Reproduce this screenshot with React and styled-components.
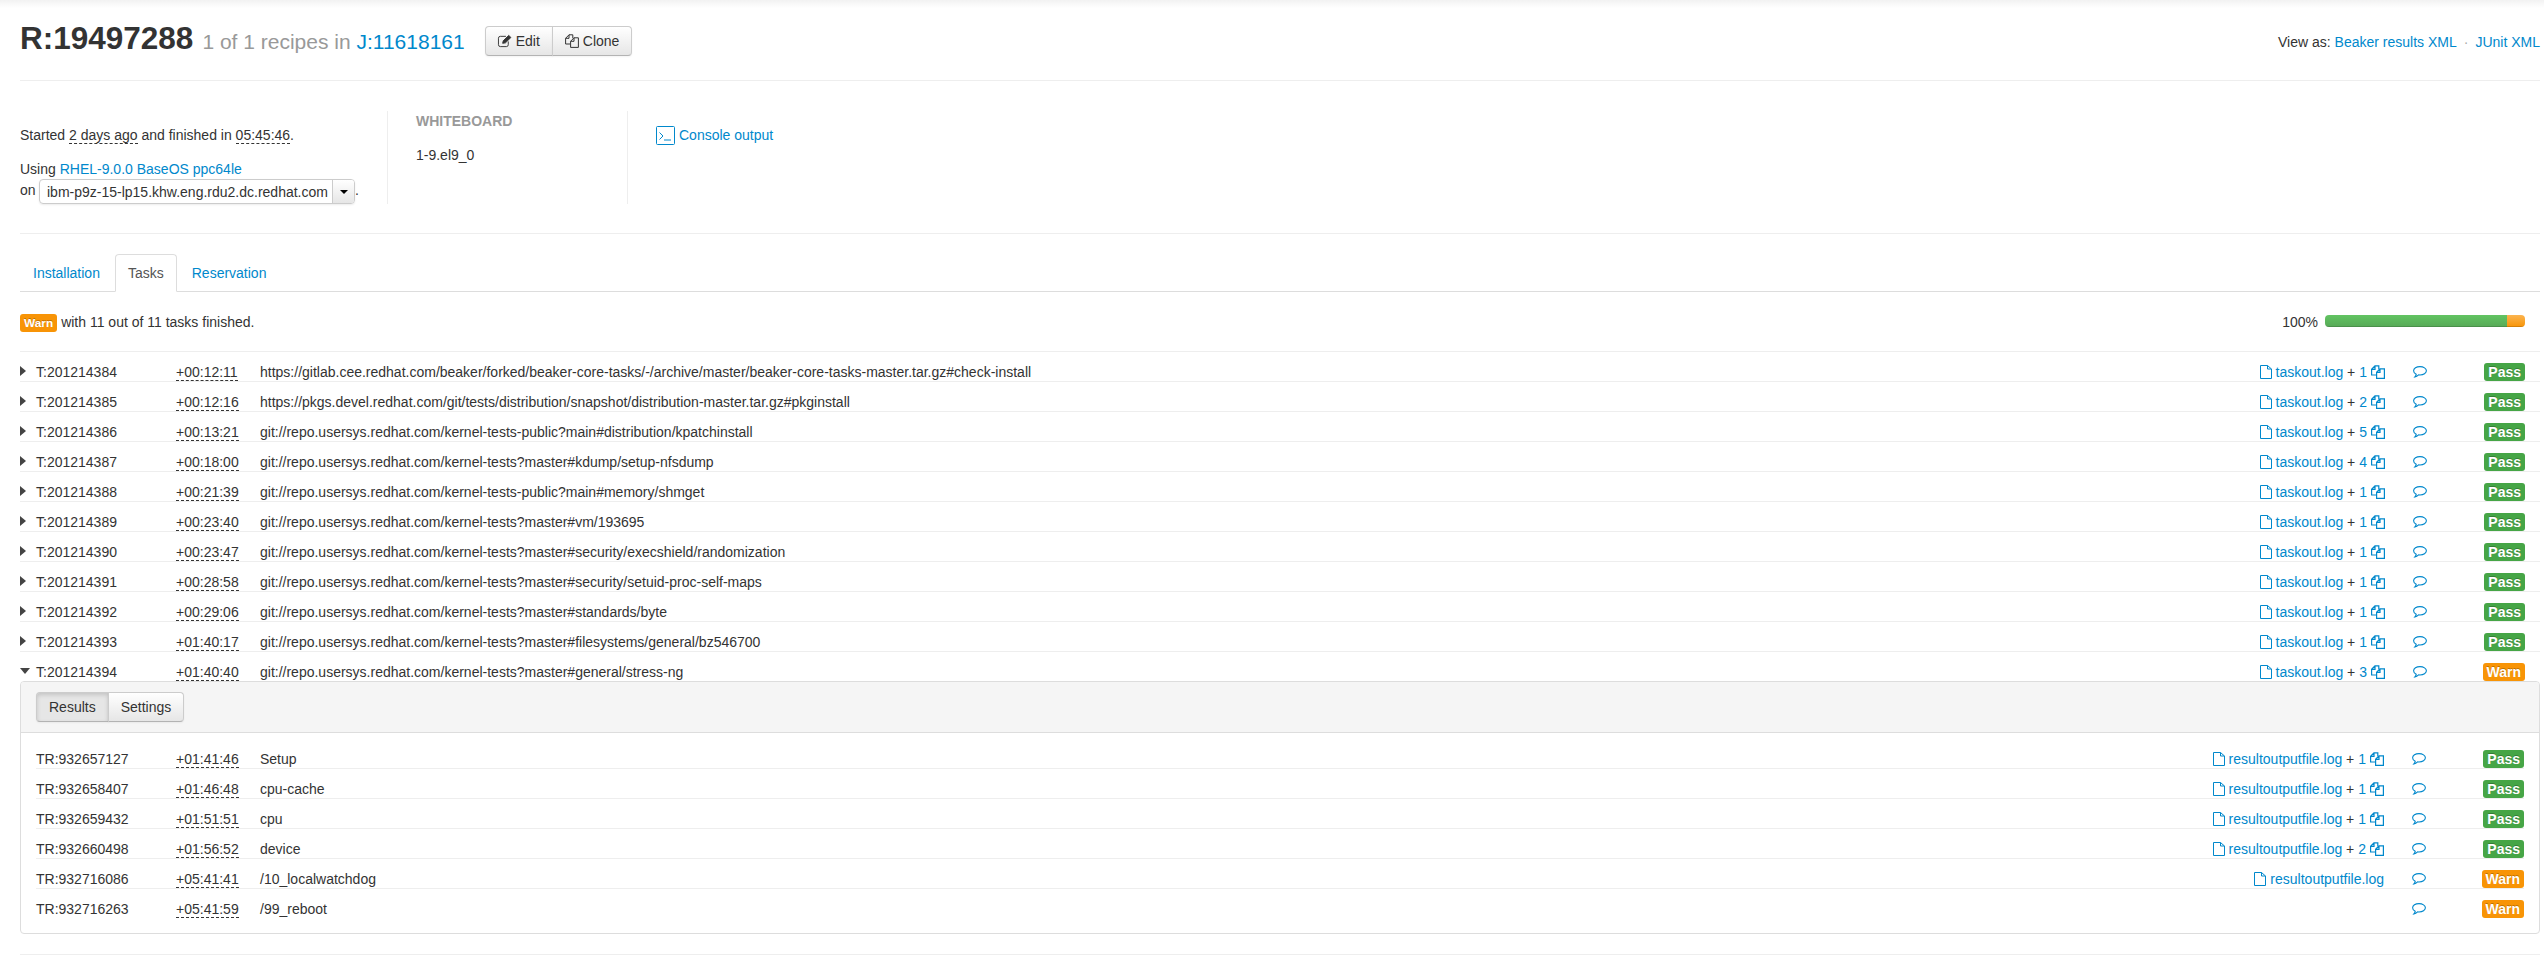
import React from "react";
import styled, { createGlobalStyle } from "styled-components";

const Global = createGlobalStyle`
  html { margin: 0; padding: 0; background: #fff; overflow: hidden; }
  body { margin: 0; padding: 0; font: 14px/20px "Liberation Sans", Arial, sans-serif; color: #333; }
  * { box-sizing: border-box; }
`;

const link = "#0088cc";

const Shade = styled.div`height: 8px; background: linear-gradient(#f2f2f2, #fff);`;
const Page = styled.div`padding: 0 4px 0 20px;`;
const Header = styled.header`
  display: flex; align-items: flex-start; justify-content: space-between;
  height: 73px; border-bottom: 1px solid #eee;
`;
const TitleGroup = styled.div`display: flex; align-items: flex-start;`;
const Title = styled.h1`
  margin: 10px 0 0; font-size: 31.5px; line-height: 40px; font-weight: bold; color: #333;
`;
const TitleNote = styled.small`font-size: 21px; font-weight: normal; color: #999; margin-left: 9px;`;
const A = styled.a`color: ${link}; text-decoration: none;`;
const BtnGroup = styled.div`display: inline-flex; margin: ${p => p.$m || "0"};`;
const Btn = styled.button`
  font: inherit; color: #333; height: 30px; padding: 4px 12px;
  display: inline-flex; align-items: center; gap: 4px;
  border: 1px solid #ccc; border-bottom-color: #b3b3b3;
  margin-left: -1px;
  background: ${p => p.$active ? "#e6e6e6" : "linear-gradient(#fff, #e6e6e6)"};
  box-shadow: ${p => p.$active
    ? "inset 0 2px 4px rgba(0,0,0,.15), 0 1px 2px rgba(0,0,0,.05)"
    : "inset 0 1px 0 rgba(255,255,255,.2), 0 1px 2px rgba(0,0,0,.05)"};
  &:first-child { margin-left: 0; border-radius: 4px 0 0 4px; }
  &:last-child { border-radius: 0 4px 4px 0; }
`;
const ViewAs = styled.div`margin-top: 24px;`;
const Dot = styled.span`color: #aaa; margin: 0 7px;`;

const Meta = styled.section`
  display: grid; grid-template-columns: 367px 240px 1fr;
  padding: 30px 0 29px; border-bottom: 1px solid #eee; height: 153px;
`;
const MetaCol = styled.div`
  height: 93px; padding-left: ${p => p.$first ? 0 : "28px"};
  padding-top: ${p => p.$first ? "14px" : 0};
  border-left: ${p => p.$first ? "0" : "1px solid #eee"};
`;
const Para = styled.p`margin: 0 0 14px;`;
const Abbr = styled.span`border-bottom: 1px dashed #333;`;
const OnLine = styled.div`display: flex; align-items: flex-start; margin-top: 0;`;
const OnText = styled.span`margin-top: 1px; width: 19px;`;
const Select = styled.div`
  display: flex; width: 316px; height: 25px; border: 1px solid #ccc; border-radius: 4px;
  box-shadow: 0 1px 2px rgba(0,0,0,.08);
`;
const SelectValue = styled.div`flex: 1; padding: 2px 0 0 7px;`;
const SelectCaret = styled.div`
  width: 22px; border-left: 1px solid #ccc; background: linear-gradient(#fff, #e6e6e6);
  display: flex; align-items: center; justify-content: center; border-radius: 0 3px 3px 0;
`;
const Caret = styled.i`
  display: block; width: 0; height: 0; border: 4px solid transparent; border-top-color: #000; border-bottom: 0;
`;
const Label = styled.div`font-weight: bold; color: #999;`;
const MetaValue = styled.div`margin-top: 14px;`;
const Console = styled(A)`display: flex; align-items: center; gap: 4px; margin-top: 14px;`;

const Tabs = styled.nav`
  display: flex; margin-top: 20px; border-bottom: 1px solid #ddd; height: 38px;
`;
const Tab = styled.a`
  height: 38px; padding: 8px 12px; margin-right: 2px; border: 1px solid transparent;
  border-radius: 4px 4px 0 0; color: ${link}; text-decoration: none;
  ${p => p.$active && "color: #555; background: #fff; border-color: #ddd #ddd #fff;"}
`;

const Status = styled.div`
  display: flex; justify-content: space-between; align-items: flex-start;
  height: 60px; padding: 20px 15px 0 0; border-bottom: 1px solid #eee;
`;
const StatusText = styled.div`display: flex; align-items: flex-start; gap: 4px;`;
const StatusBadge = styled.span`display: block; margin-top: 2px; line-height: 0;`;
const Progress = styled.div`display: flex; align-items: flex-start; gap: 7px;`;
const Bar = styled.div`display: flex; width: 200px; height: 12px; margin-top: 3px; border-radius: 4px; overflow: hidden;`;
const Segment = styled.div`
  background: ${p => p.$warn ? "linear-gradient(#fbb450,#f89406)" : "linear-gradient(#62c462,#57a957)"};
  box-shadow: inset 0 -1px 0 rgba(0,0,0,.15);
`;
const Badge = styled.span`
  display: inline-block; padding: 2px 4px; border-radius: 3px; color: #fff; font-weight: bold;
  font-size: ${p => p.$small ? "11.844px" : "14px"}; line-height: 14px;
  background: ${p => p.$s === "Warn" ? "#f89406" : "#46a546"};
  text-shadow: 0 -1px 0 rgba(0,0,0,.25);
`;

const columns = "140px 84px 1fr auto 70px 70px";
const TaskRow = styled.div`
  display: grid; grid-template-columns: 16px ${columns}; height: ${p => p.$last ? "29px" : "30px"}; padding: 10px 15px 0 0;
  border-bottom: ${p => p.$last ? "0" : "1px solid #eee"};
`;
const ResultRow = styled.div`
  display: grid; grid-template-columns: ${columns}; height: 30px; padding-top: 10px;
  border-bottom: ${p => p.$last ? "0" : "1px solid #eee"};
  &:first-child { height: 21px; padding-top: 1px; }
`;
const Arrow = styled.i`
  display: block; width: 0; height: 0; margin-top: 4px;
  border-style: solid; border-color: transparent;
  ${p => p.$open
    ? "border-width: 6px 5px 0 5px; border-top-color: #444; margin-top: 6px;"
    : "border-width: 5.5px 0 5.5px 6px; border-left-color: #444;"}
`;
const Logs = styled.div`display: flex; align-items: center; height: 20px; white-space: pre;`;
const LogLink = styled(A)`display: inline-flex; align-items: center; gap: 4px;`;
const CommentCell = styled.div`padding-left: 28px; display: flex; align-items: center; height: 20px;`;
const StatusCell = styled.div`text-align: right; line-height: 18px; margin-top: 1px;`;

const Panel = styled.section`
  border: 1px solid #ddd; border-radius: 4px; height: 253px;
`;
const PanelHead = styled.div`
  height: 51px; padding: 10px 15px; background: #f5f5f5; border-bottom: 1px solid #ddd;
  border-radius: 3px 3px 0 0;
`;
const PanelBody = styled.div`padding: 15px 15px 14px;`;
const Footer = styled.div`margin-top: 20px; border-top: 1px solid #eee;`;

const Svg = styled.svg`display: block; flex: none; overflow: visible;`;
const FileIcon = () => (
  <Svg width="12" height="14" viewBox="0 0 12 14" fill="none" stroke={link}>
    <path d="M.5.5h7l4 3.500v9.500H.5zM7.500.5v3.500h4" />
  </Svg>
);
const copyPaths = (
  <>
    <path d="M5 10H.6V4.300L4 .8h3.800v3.400M4 .8v3.500H.6" />
    <path d="M5.600 13.400V7.300L9 3.800h4.400v9.600zM9 3.800v3.500H5.600" />
  </>
);
const CopyIcon = () => (
  <Svg width="14" height="14" viewBox="0 0 14 14" fill="none" stroke={link} strokeWidth="1.2">{copyPaths}</Svg>
);
const CommentIcon = () => (
  <Svg width="14" height="12" viewBox="0 0 14 12" fill="none" stroke={link} strokeWidth="1.1">
    <path d="M7 .6C3.400.6.6 2.400.6 4.800c0 1.500 1 2.700 2.600 3.500-.2.9-.7 1.900-1.300 2.600 1.400-.3 2.800-1.200 3.700-2 .4.1.9.1 1.400.1 3.600 0 6.400-1.900 6.400-4.200S10.600.6 7 .6z" />
  </Svg>
);
const EditIcon = () => (
  <Svg width="14" height="14" viewBox="0 0 15 14" fill="none" stroke="#333">
    <path d="M11 7.500v3.500a2 2 0 0 1-2 2H2.500a2 2 0 0 1-2-2V4a2 2 0 0 1 2-2h6" />
    <path d="M5 9.500l.6-2.700L11.500 1l2.300 2.200L8 9z" fill="#333" />
  </Svg>
);
const CloneIcon = () => (
  <Svg width="14" height="14" viewBox="0 0 14 14" fill="none" stroke="#333">{copyPaths}</Svg>
);
const ConsoleIcon = () => (
  <Svg width="19" height="19" viewBox="0 0 19 19" fill="none" stroke={link}>
    <rect x=".5" y=".5" width="18" height="18" rx="1" />
    <path d="M3.500 6.500l3.500 3.500-3.500 3.500M8 14h7" />
  </Svg>
);

const tasks = [
  ["T:201214384", "+00:12:11", "https://gitlab.cee.redhat.com/beaker/forked/beaker-core-tasks/-/archive/master/beaker-core-tasks-master.tar.gz#check-install", 1, "Pass"],
  ["T:201214385", "+00:12:16", "https://pkgs.devel.redhat.com/git/tests/distribution/snapshot/distribution-master.tar.gz#pkginstall", 2, "Pass"],
  ["T:201214386", "+00:13:21", "git://repo.usersys.redhat.com/kernel-tests-public?main#distribution/kpatchinstall", 5, "Pass"],
  ["T:201214387", "+00:18:00", "git://repo.usersys.redhat.com/kernel-tests?master#kdump/setup-nfsdump", 4, "Pass"],
  ["T:201214388", "+00:21:39", "git://repo.usersys.redhat.com/kernel-tests-public?main#memory/shmget", 1, "Pass"],
  ["T:201214389", "+00:23:40", "git://repo.usersys.redhat.com/kernel-tests?master#vm/193695", 1, "Pass"],
  ["T:201214390", "+00:23:47", "git://repo.usersys.redhat.com/kernel-tests?master#security/execshield/randomization", 1, "Pass"],
  ["T:201214391", "+00:28:58", "git://repo.usersys.redhat.com/kernel-tests?master#security/setuid-proc-self-maps", 1, "Pass"],
  ["T:201214392", "+00:29:06", "git://repo.usersys.redhat.com/kernel-tests?master#standards/byte", 1, "Pass"],
  ["T:201214393", "+01:40:17", "git://repo.usersys.redhat.com/kernel-tests?master#filesystems/general/bz546700", 1, "Pass"],
  ["T:201214394", "+01:40:40", "git://repo.usersys.redhat.com/kernel-tests?master#general/stress-ng", 3, "Warn"],
];
const results = [
  ["TR:932657127", "+01:41:46", "Setup", "resultoutputfile.log", 1, "Pass"],
  ["TR:932658407", "+01:46:48", "cpu-cache", "resultoutputfile.log", 1, "Pass"],
  ["TR:932659432", "+01:51:51", "cpu", "resultoutputfile.log", 1, "Pass"],
  ["TR:932660498", "+01:56:52", "device", "resultoutputfile.log", 2, "Pass"],
  ["TR:932716086", "+05:41:41", "/10_localwatchdog", "resultoutputfile.log", 0, "Warn"],
  ["TR:932716263", "+05:41:59", "/99_reboot", null, 0, "Warn"],
];

const LogCell = ({ file, extra }) => (
  <Logs>
    {file && <LogLink href="#"><FileIcon />{file}</LogLink>}
    {extra > 0 && <> + <LogLink href="#">{extra}<CopyIcon /></LogLink></>}
  </Logs>
);

export default function App() {
  return (
    <>
      <Global />
      <Shade />
      <Page>
        <Header>
          <TitleGroup>
            <Title>R:19497288<TitleNote>1 of 1 recipes in <A href="#">J:11618161</A></TitleNote></Title>
            <BtnGroup $m="18px 0 0 20px">
              <Btn><EditIcon />Edit</Btn>
              <Btn><CloneIcon />Clone</Btn>
            </BtnGroup>
          </TitleGroup>
          <ViewAs>View as: <A href="#">Beaker results XML</A><Dot>·</Dot><A href="#">JUnit XML</A></ViewAs>
        </Header>
        <Meta>
          <MetaCol $first>
            <Para>Started <Abbr>2 days ago</Abbr> and finished in <Abbr>05:45:46</Abbr>.</Para>
            <div>Using <A href="#">RHEL-9.0.0 BaseOS ppc64le</A></div>
            <OnLine>
              <OnText>on</OnText>
              <Select>
                <SelectValue>ibm-p9z-15-lp15.khw.eng.rdu2.dc.redhat.com</SelectValue>
                <SelectCaret><Caret /></SelectCaret>
              </Select>
              <OnText>.</OnText>
            </OnLine>
          </MetaCol>
          <MetaCol>
            <Label>WHITEBOARD</Label>
            <MetaValue>1-9.el9_0</MetaValue>
          </MetaCol>
          <MetaCol>
            <Console href="#"><ConsoleIcon />Console output</Console>
          </MetaCol>
        </Meta>
        <Tabs>
          <Tab href="#">Installation</Tab>
          <Tab href="#" $active>Tasks</Tab>
          <Tab href="#">Reservation</Tab>
        </Tabs>
        <Status>
          <StatusText>
            <StatusBadge><Badge $s="Warn" $small>Warn</Badge></StatusBadge>
            with 11 out of 11 tasks finished.
          </StatusText>
          <Progress>
            100%
            <Bar>
              <Segment style={{ width: "91%" }} />
              <Segment $warn style={{ width: "9%" }} />
            </Bar>
          </Progress>
        </Status>
        {tasks.map((t, i) => {
          const open = i === tasks.length - 1;
          return (
            <TaskRow key={t[0]} $last={open}>
              <Arrow $open={open} />
              <div>{t[0]}</div>
              <div><Abbr>{t[1]}</Abbr></div>
              <div>{t[2]}</div>
              <LogCell file="taskout.log" extra={t[3]} />
              <CommentCell><CommentIcon /></CommentCell>
              <StatusCell><Badge $s={t[4]}>{t[4]}</Badge></StatusCell>
            </TaskRow>
          );
        })}
        <Panel>
          <PanelHead>
            <BtnGroup>
              <Btn $active>Results</Btn>
              <Btn>Settings</Btn>
            </BtnGroup>
          </PanelHead>
          <PanelBody>
            {results.map((r, i) => (
              <ResultRow key={r[0]} $last={i === results.length - 1}>
                <div>{r[0]}</div>
                <div><Abbr>{r[1]}</Abbr></div>
                <div>{r[2]}</div>
                <LogCell file={r[3]} extra={r[4]} />
                <CommentCell><CommentIcon /></CommentCell>
                <StatusCell><Badge $s={r[5]}>{r[5]}</Badge></StatusCell>
              </ResultRow>
            ))}
          </PanelBody>
        </Panel>
        <Footer />
      </Page>
    </>
  );
}
